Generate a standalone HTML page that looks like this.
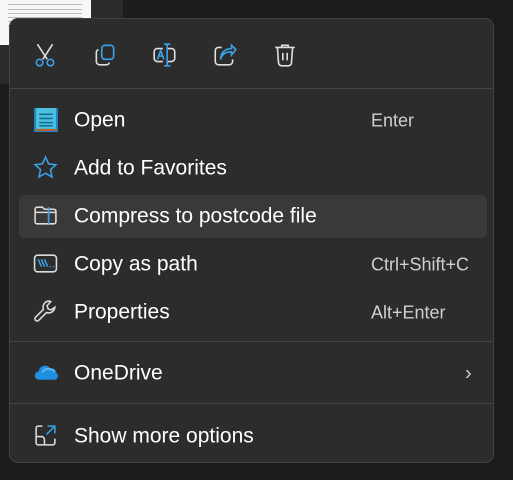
<!DOCTYPE html>
<html><head><meta charset="utf-8"><style>
html,body{margin:0;padding:0;width:513px;height:480px;overflow:hidden;background:#1c1c1c;font-family:"Segoe UI","Liberation Sans",sans-serif;}
.menu{position:absolute;left:9px;top:18px;width:485px;height:445px;background:#2c2c2c;border:1px solid #414141;border-radius:9px;box-sizing:border-box;}
.sep{position:absolute;left:0;right:0;height:1px;background:#444;}
.item{position:absolute;left:9px;width:468px;height:43px;border-radius:5px;color:#fff;font-size:21px;}
.item .t{position:absolute;left:55px;top:50%;transform:translateY(-52%);}
.item .k{position:absolute;left:352px;top:50%;transform:translateY(-50%);font-size:18px;color:#cfcfcf;}
.item svg{position:absolute;left:14px;top:8px;}
.tb svg{position:absolute;top:23px;}
</style></head><body>
<div style="position:absolute;left:0;top:0;width:123px;height:84px;background:#2b2b2b"></div>
<div style="position:absolute;left:0;top:0;width:91px;height:45px;background:#f6f6f6">
 <div style="position:absolute;left:8px;top:4px;width:74px;height:1px;background:#bbb"></div>
 <div style="position:absolute;left:8px;top:9px;width:74px;height:1px;background:#bbb"></div>
 <div style="position:absolute;left:8px;top:13px;width:74px;height:1px;background:#bbb"></div>
 <div style="position:absolute;left:8px;top:17px;width:74px;height:1px;background:#bbb"></div>
 <div style="position:absolute;left:8px;top:21px;width:74px;height:1px;background:#bbb"></div>
 <div style="position:absolute;left:8px;top:25px;width:74px;height:1px;background:#bbb"></div>
</div>
<div class="menu">
 <div class="tb">
  <svg style="left:22px" width="26" height="26" viewBox="0 0 24 24" fill="none" stroke-width="1.5"><path d="M5 2l9 14M19 2l-9 14" stroke="#ddd"/><circle cx="7" cy="19" r="3" stroke="#3aa3e6"/><circle cx="17" cy="19" r="3" stroke="#3aa3e6"/></svg>
  <svg style="left:82px" width="26" height="26" viewBox="0 0 24 24" fill="none" stroke-width="1.5"><rect x="9" y="3" width="11" height="13" rx="3" stroke="#3aa3e6"/><path d="M6 7a3 3 0 0 0-2 3v8a3 3 0 0 0 3 3h6a3 3 0 0 0 3-2" stroke="#ddd"/></svg>
  <svg style="left:142px" width="26" height="26" viewBox="0 0 24 24" fill="none" stroke-width="1.5"><path d="M14 6h4a3 3 0 0 1 3 3v6a3 3 0 0 1-3 3h-4M10 6H5a3 3 0 0 0-3 3v6a3 3 0 0 0 3 3h5" stroke="#ddd"/><path d="M14 2v20M11 2h6M11 22h6M5 16l3-8 3 8M6 13h4" stroke="#3aa3e6"/></svg>
  <svg style="left:202px" width="26" height="26" viewBox="0 0 24 24" fill="none" stroke-width="1.5"><path d="M9 5H6a3 3 0 0 0-3 3v10a3 3 0 0 0 3 3h10a3 3 0 0 0 3-3v-2" stroke="#ddd"/><path d="M8 16c1-5 5-7 10-7V12l4-5-4-4v3c-6 0-10 4-10 10z" stroke="#3aa3e6"/></svg>
  <svg style="left:262px" width="26" height="26" viewBox="0 0 24 24" fill="none" stroke="#ddd" stroke-width="1.5"><path d="M3 5h18M9 5V3h6v2M5 5l1 14a3 3 0 0 0 3 3h6a3 3 0 0 0 3-3l1-14M10 10v7M14 10v7"/></svg>
 </div>
 <div class="sep" style="top:69px"></div>
 <div class="item" style="top:80px"><svg width="25" height="25" viewBox="0 0 24 24"><rect x="1" y="1" width="23" height="23" fill="#1e86c8"/><rect x="3" y="1" width="19" height="21" fill="#4cc0dd"/><rect x="3" y="21" width="19" height="2" fill="#b8612c"/><path d="M6 7h13M6 11h13M6 15h13M6 18h13" stroke="#176b94" stroke-width="1.5"/></svg><span class="t">Open</span><span class="k">Enter</span></div>
 <div class="item" style="top:128px"><svg width="25" height="25" viewBox="0 0 24 24" fill="none" stroke="#3aa3e6" stroke-width="1.5"><path d="M12 2l3 6.5 7 .8-5.2 4.8 1.4 7L12 17.5 5.8 21l1.4-7L2 9.3l7-.8z"/></svg><span class="t">Add to Favorites</span></div>
 <div class="item" style="top:176px;background:#393939"><svg width="25" height="25" viewBox="0 0 24 24" fill="none" stroke-width="1.5"><path d="M2 6a2 2 0 0 1 2-2h5l2 2h9a2 2 0 0 1 2 2v10a2 2 0 0 1-2 2H4a2 2 0 0 1-2-2z" stroke="#ddd"/><path d="M2 9h20" stroke="#ddd"/><path d="M15 4v16M14 7h2M14 11h2M14 15h2" stroke="#3aa3e6"/></svg><span class="t">Compress to postcode file</span></div>
 <div class="item" style="top:224px"><svg width="25" height="25" viewBox="0 0 24 24" fill="none" stroke-width="1.5"><rect x="1.5" y="4" width="21" height="16" rx="3" stroke="#ddd"/><path d="M5 8l3 7M8 8l3 7M11 8l3 7" stroke="#3aa3e6"/><path d="M16 15h1M19 15h1" stroke="#3aa3e6"/></svg><span class="t">Copy as path</span><span class="k">Ctrl+Shift+C</span></div>
 <div class="item" style="top:272px"><svg width="25" height="25" viewBox="0 0 24 24" fill="none" stroke="#ddd" stroke-width="1.5"><path d="M15 2a6 6 0 0 0-5 8L2.5 17.5a2 2 0 0 0 3 3L13 13a6 6 0 0 0 8-5l-3.5 2.5-3-1-1-3L17 2.5A6 6 0 0 0 15 2z"/></svg><span class="t">Properties</span><span class="k">Alt+Enter</span></div>
 <div class="sep" style="top:322px"></div>
 <div class="item" style="top:333px"><svg width="25" height="25" viewBox="0 0 24 24"><path d="M6 19a4 4 0 0 1-.5-8A6 6 0 0 1 17 9a4 4 0 0 1 4 2.5A3.8 3.8 0 0 1 20 19z" fill="#1f8fe0"/><path d="M9 12a6 6 0 0 1 8-3 4 4 0 0 1 4 2.5" fill="none" stroke="#5ab8f2" stroke-width="2"/></svg><span class="t">OneDrive</span><span class="k" style="left:446px;font-size:20px;color:#ccc">›</span></div>
 <div class="sep" style="top:384px"></div>
 <div class="item" style="top:396px"><svg width="25" height="25" viewBox="0 0 24 24" fill="none" stroke-width="1.5"><path d="M9 3H5a2 2 0 0 0-2 2v14a2 2 0 0 0 2 2h14a2 2 0 0 0 2-2v-4M3 13h5a3 3 0 0 1 3 3v5" stroke="#ddd"/><path d="M14 3h7v7M21 3l-8 8" stroke="#3aa3e6"/></svg><span class="t">Show more options</span></div>
</div>
</body></html>
